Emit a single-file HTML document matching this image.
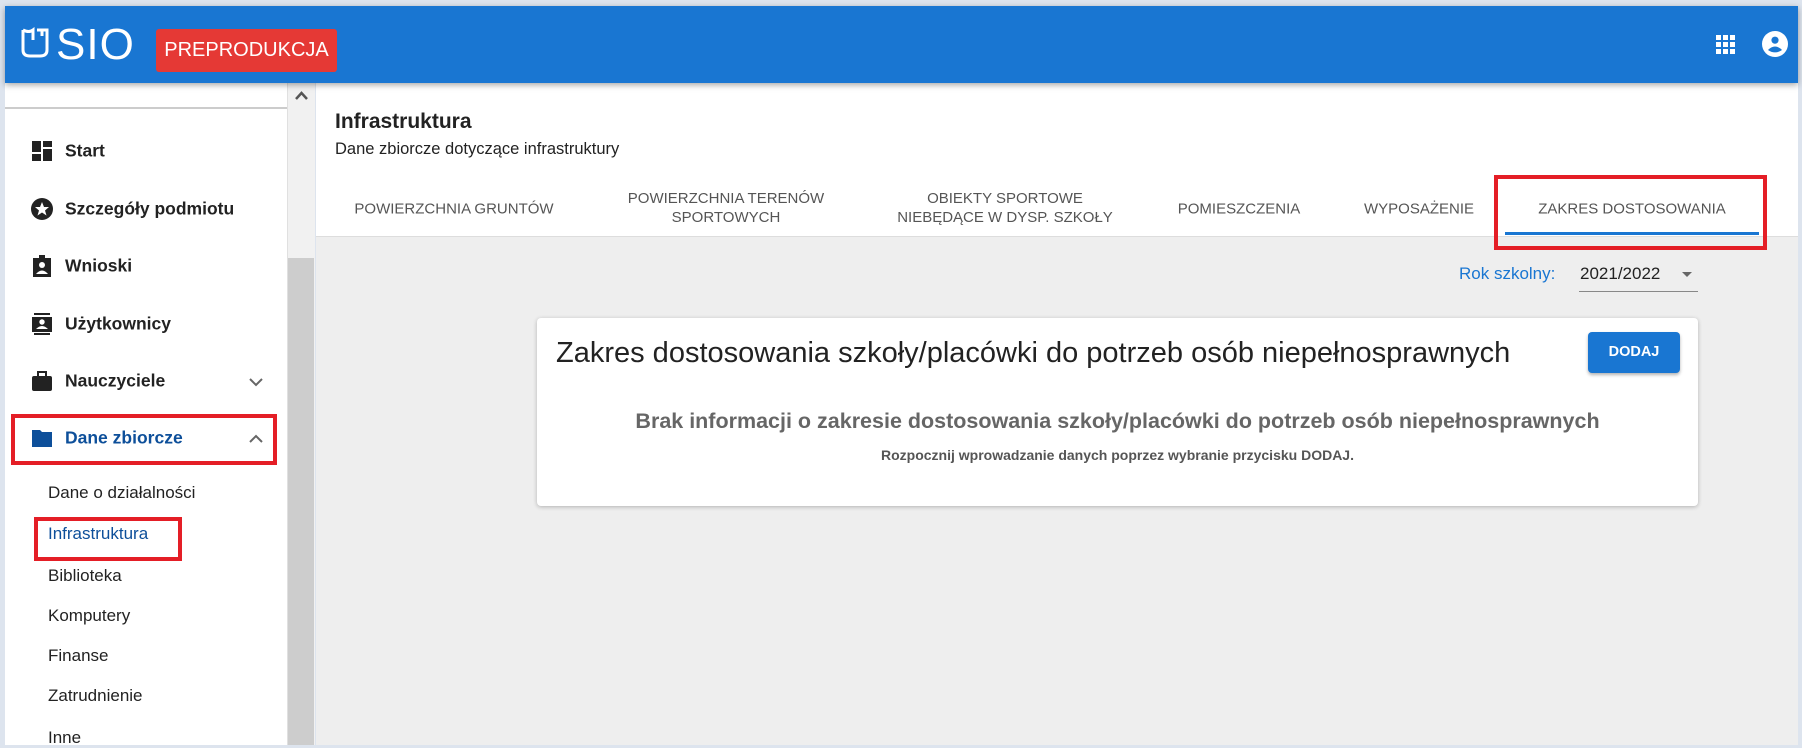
<!DOCTYPE html>
<html><head><meta charset="utf-8"><style>
*{margin:0;padding:0;box-sizing:border-box}
body{width:1802px;height:745px;overflow:hidden;background:#dde4ee;font-family:"Liberation Sans",sans-serif;position:relative}
.abs{position:absolute}
#hdr{left:5px;top:6px;width:1793px;height:77px;background:#1976d2;box-shadow:0 2px 6px rgba(0,0,0,.35);z-index:5}
#side{left:5px;top:83px;width:282px;height:662px;background:#fff}
#sb{left:287px;top:83px;width:28px;height:662px;background:#f1f1f1;border-left:1px solid #e0e0e0}
#thumb{left:288px;top:258px;width:26px;height:487px;background:#cdcdcd}
#main{left:316px;top:83px;width:1482px;height:662px;background:#eeeeee}
#mhead{left:316px;top:83px;width:1482px;height:154px;background:#fff;border-bottom:1px solid #ddd}
.mi{position:absolute;left:60px;font-size:17.5px;color:#222;font-weight:bold;transform:translateY(-50%)}
.ic{position:absolute;left:26px;width:22px;height:22px;transform:translateY(-50%)}
.sub{position:absolute;left:43px;font-size:17px;color:#222;transform:translateY(-50%)}
.tab{position:absolute;font-size:15px;color:#555;text-align:center;transform:translate(-50%,-50%);line-height:19px;white-space:nowrap}
.red{position:absolute;border:4px solid #e41e26}
</style></head><body>
<div class="abs" id="hdr">
 <svg class="abs" style="left:15px;top:21px" width="30" height="32" viewBox="0 0 30 32"><path d="M3 3 L3 23 Q3 29 10 29 L20 29 Q27 29 27 23 L27 3 L22 3 L22 9 M3 3 Q9 6 13 3 L13 13 M17 3 L22 3" fill="none" stroke="#fff" stroke-width="3"/></svg>
 <div class="abs" style="left:51px;top:14px;font-size:44px;line-height:50px;color:#fff;letter-spacing:1px">SIO</div>
 <div class="abs" style="left:151px;top:23px;width:181px;height:43px;background:#e53935;border-radius:3px;color:#fff;font-size:20px;line-height:43px;text-align:center;white-space:nowrap">PREPRODUKCJA</div>
 <svg class="abs" style="left:1711px;top:29px" width="20" height="20" viewBox="0 0 20 20" fill="#fff"><rect x="0" y="0" width="5" height="5"/><rect x="7" y="0" width="5" height="5"/><rect x="14" y="0" width="5" height="5"/><rect x="0" y="7" width="5" height="5"/><rect x="7" y="7" width="5" height="5"/><rect x="14" y="7" width="5" height="5"/><rect x="0" y="14" width="5" height="5"/><rect x="7" y="14" width="5" height="5"/><rect x="14" y="14" width="5" height="5"/></svg>
 <svg class="abs" style="left:1757px;top:25px" width="26" height="26" viewBox="0 0 24 24"><circle cx="12" cy="12" r="12" fill="#fff"/><circle cx="12" cy="8.5" r="3.3" fill="#1976d2"/><path d="M5.5 17.5 Q12 11 18.5 17.5 Q12 22 5.5 17.5Z" fill="#1976d2"/></svg>
</div>
<div class="abs" id="side">
 <div class="abs" style="left:0;top:24px;width:282px;height:2px;background:#ccc"></div>
 <svg class="ic" style="top:68px" viewBox="0 0 22 22" fill="#222"><rect x="1" y="1" width="9" height="11"/><rect x="12" y="1" width="9" height="6"/><rect x="12" y="9" width="9" height="12"/><rect x="1" y="14" width="9" height="7"/></svg>
 <div class="mi" style="top:68px">Start</div>
 <svg class="ic" style="top:126px" viewBox="0 0 22 22"><circle cx="11" cy="11" r="11" fill="#222"/><path d="M11 4 L13 9 L18 9 L14 12.5 L15.5 17.5 L11 14.5 L6.5 17.5 L8 12.5 L4 9 L9 9Z" fill="#fff"/></svg>
 <div class="mi" style="top:126px">Szczegóły podmiotu</div>
 <svg class="ic" style="top:183px" viewBox="0 0 22 22"><rect x="2" y="3" width="18" height="19" fill="#222"/><rect x="8" y="0" width="6" height="4" fill="#222"/><circle cx="11" cy="10" r="3" fill="#fff"/><path d="M5 19 Q11 12 17 19Z" fill="#fff"/></svg>
 <div class="mi" style="top:183px">Wnioski</div>
 <svg class="ic" style="top:241px" viewBox="0 0 22 22"><rect x="1" y="4" width="20" height="15" fill="#222"/><rect x="3" y="0" width="16" height="2" fill="#222"/><rect x="3" y="20" width="16" height="2" fill="#222"/><circle cx="11" cy="9" r="2.7" fill="#fff"/><path d="M5 16 Q11 10 17 16Z" fill="#fff"/></svg>
 <div class="mi" style="top:241px">Użytkownicy</div>
 <svg class="ic" style="top:298px" viewBox="0 0 22 22"><rect x="1" y="6" width="20" height="15" rx="2" fill="#222"/><rect x="7" y="2" width="8" height="5" fill="none" stroke="#222" stroke-width="2"/></svg>
 <div class="mi" style="top:298px">Nauczyciele</div>
 <svg class="abs" style="left:244px;top:295px" width="14" height="9" viewBox="0 0 14 9"><path d="M1 1 L7 7 L13 1" fill="none" stroke="#666" stroke-width="2"/></svg>
 <svg class="ic" style="top:355px" viewBox="0 0 22 22"><path d="M1 3 L9 3 L11 5 L21 5 L21 20 L1 20Z" fill="#0d4f9a"/></svg>
 <div class="mi" style="top:355px;color:#0d4f9a">Dane zbiorcze</div>
 <svg class="abs" style="left:244px;top:351px" width="14" height="9" viewBox="0 0 14 9"><path d="M1 8 L7 2 L13 8" fill="none" stroke="#666" stroke-width="2"/></svg>
 <div class="sub" style="top:410px">Dane o działalności</div>
 <div class="sub" style="top:451px;color:#0d4f9a">Infrastruktura</div>
 <div class="sub" style="top:493px">Biblioteka</div>
 <div class="sub" style="top:533px">Komputery</div>
 <div class="sub" style="top:573px">Finanse</div>
 <div class="sub" style="top:613px">Zatrudnienie</div>
 <div class="sub" style="top:655px">Inne</div>
</div>
<div class="abs" id="sb"></div>
<div class="abs" id="thumb"></div>
<svg class="abs" style="left:295px;top:91px" width="13" height="9" viewBox="0 0 13 9"><path d="M1 8 L6.5 2 L12 8" fill="none" stroke="#555" stroke-width="2.5"/></svg>
<div class="abs" id="main"></div>
<div class="abs" id="mhead">
 <div class="abs" style="left:19px;top:27px;font-size:21px;font-weight:bold;color:#222">Infrastruktura</div>
 <div class="abs" style="left:19px;top:57px;font-size:16.5px;color:#222">Dane zbiorcze dotyczące infrastruktury</div>
</div>
<div class="tab" style="left:454px;top:209px">POWIERZCHNIA GRUNTÓW</div>
<div class="tab" style="left:726px;top:208px">POWIERZCHNIA TERENÓW<br>SPORTOWYCH</div>
<div class="tab" style="left:1005px;top:208px">OBIEKTY SPORTOWE<br>NIEBĘDĄCE W DYSP. SZKOŁY</div>
<div class="tab" style="left:1239px;top:209px">POMIESZCZENIA</div>
<div class="tab" style="left:1419px;top:209px">WYPOSAŻENIE</div>
<div class="tab" style="left:1632px;top:209px">ZAKRES DOSTOSOWANIA</div>
<div class="abs" style="left:1505px;top:232px;width:254px;height:3px;background:#1976d2"></div>
<div class="red" style="left:1494px;top:175px;width:273px;height:75px"></div>
<div class="red" style="left:11px;top:414px;width:266px;height:51px"></div>
<div class="red" style="left:34px;top:517px;width:148px;height:44px"></div>
<div class="abs" style="left:1459px;top:264px;font-size:17px;color:#1976d2">Rok szkolny:</div>
<div class="abs" style="left:1580px;top:264px;font-size:17px;color:#222">2021/2022</div>
<div class="abs" style="left:1682px;top:272px;width:0;height:0;border-left:5px solid transparent;border-right:5px solid transparent;border-top:5px solid #666"></div>
<div class="abs" style="left:1579px;top:291px;width:119px;height:1px;background:#888"></div>
<div class="abs" style="left:537px;top:318px;width:1161px;height:188px;background:#fff;border-radius:4px;box-shadow:0 1px 4px rgba(0,0,0,.25)">
 <div class="abs" style="left:19px;top:19px;font-size:29px;color:#222;white-space:nowrap">Zakres dostosowania szkoły/placówki do potrzeb osób niepełnosprawnych</div>
 <div class="abs" style="left:1051px;top:14px;width:92px;height:41px;background:#1976d2;border-radius:4px;color:#fff;font-size:14.5px;font-weight:bold;line-height:41px;text-align:center;box-shadow:0 2px 3px rgba(0,0,0,.3)">DODAJ</div>
 <div class="abs" style="left:0;width:1161px;top:91px;text-align:center;font-size:21.5px;color:#666;font-weight:bold">Brak informacji o zakresie dostosowania szkoły/placówki do potrzeb osób niepełnosprawnych</div>
 <div class="abs" style="left:0;width:1161px;top:129px;text-align:center;font-size:14px;color:#555;font-weight:bold">Rozpocznij wprowadzanie danych poprzez wybranie przycisku DODAJ.</div>
</div>
</body></html>
